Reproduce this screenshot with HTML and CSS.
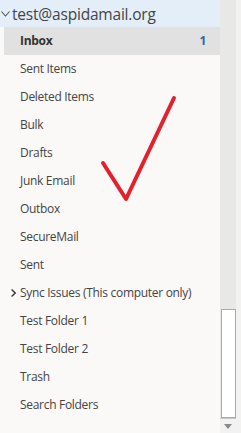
FILE: index.html
```html
<!DOCTYPE html>
<html lang="en">
<head>
<meta charset="UTF-8" />
<title>Folders</title>
<link rel="stylesheet" href="styles.css">
</head>
<body>

<div class="window">
  <div class="pane">
    <div class="account">
      <svg class="caret" width="9" height="6" viewBox="0 0 9 6"><polyline points="0.5,0.5 4.5,5 8.5,0.5" fill="none" stroke="#555" stroke-width="1.1" /></svg>
      <span>test@aspidamail.org</span>
    </div>
    <ul class="folders">
      <li class="selected"><span>Inbox</span><span class="count">1</span></li>
      <li>Sent Items</li>
      <li>Deleted Items</li>
      <li>Bulk</li>
      <li>Drafts</li>
      <li>Junk Email</li>
      <li>Outbox</li>
      <li>SecureMail</li>
      <li>Sent</li>
      <li class="collapsed">
        <svg class="arrow" width="5" height="8" viewBox="0 0 5 8"><polyline points="0.6,0.5 4.2,4 0.6,7.5" fill="none" stroke="#333" stroke-width="1.3" /></svg>
        <span>Sync Issues (This computer only)</span>
      </li>
      <li>Test Folder 1</li>
      <li>Test Folder 2</li>
      <li>Trash</li>
      <li>Search Folders</li>
    </ul>

    <!-- red tick drawn over the list -->
    <svg class="tick" width="220" height="433" viewBox="0 0 220 433">
      <polyline points="103,163 126,199 174,98" fill="none" stroke="#e3202b" stroke-width="4" stroke-linecap="round" stroke-linejoin="round" />
    </svg>
  </div>

  <div class="scrollbar">
    <div class="track"></div>
    <div class="thumb"></div>
    <div class="down">
      <svg width="8" height="5" viewBox="0 0 8 5"><polygon points="0,0 8,0 4,5" fill="#8a8a8a" /></svg>
    </div>
  </div>
  <div class="edge"></div>
</div>

</body>
</html>
```

FILE: styles.css
```css
body {
  margin: 0;
  font-family: 'Open Sans', 'Noto Sans', sans-serif;
  background: #f3f2f1;
}
.window {
  display: flex;
  height: 433px;
  overflow: hidden;
}
.pane {
  position: relative;
  width: 220px;
  background: #faf9f8;
  color: #444;
}
.account {
  height: 27px;
  display: flex;
  align-items: center;
  background: #e3eef9;
  font-size: 15.5px;
  color: #444;
  letter-spacing: -0.2px;
}
.caret {
  margin: 1px 2px 0 1px;
}
.folders {
  list-style: none;
  margin: 0;
  padding: 0;
  font-size: 12px;
  letter-spacing: -0.3px;
}
.folders li {
  height: 28px;
  display: flex;
  align-items: center;
  padding-left: 20px;
  padding-bottom: 1px;
  box-sizing: border-box;
}
.folders li.selected {
  margin-left: 4px;
  padding-left: 16px;
  padding-right: 14px;
  justify-content: space-between;
  background: #e1e1e1;
  font-weight: bold;
  color: #333;
}
.count {
  color: #2d69a9;
}
.folders li.collapsed {
  padding-left: 11px;
}
.arrow {
  margin-right: 4px;
}
.tick {
  position: absolute;
  left: 0;
  top: 0;
  pointer-events: none;
}
.scrollbar {
  width: 16px;
  display: flex;
  flex-direction: column;
  background: #e8e8e7;
}
.track {
  flex: 1;
}
.thumb {
  height: 107px;
  margin-left: 1px;
  background: #fff;
  border: 1px solid #a9a9a9;
}
.down {
  height: 14px;
  display: flex;
  align-items: center;
  justify-content: center;
  background: #f2f2f2;
  border-top: 1px solid #c8c8c8;
}
.edge {
  flex: 1;
  background: #f3f2f1;
}
```
